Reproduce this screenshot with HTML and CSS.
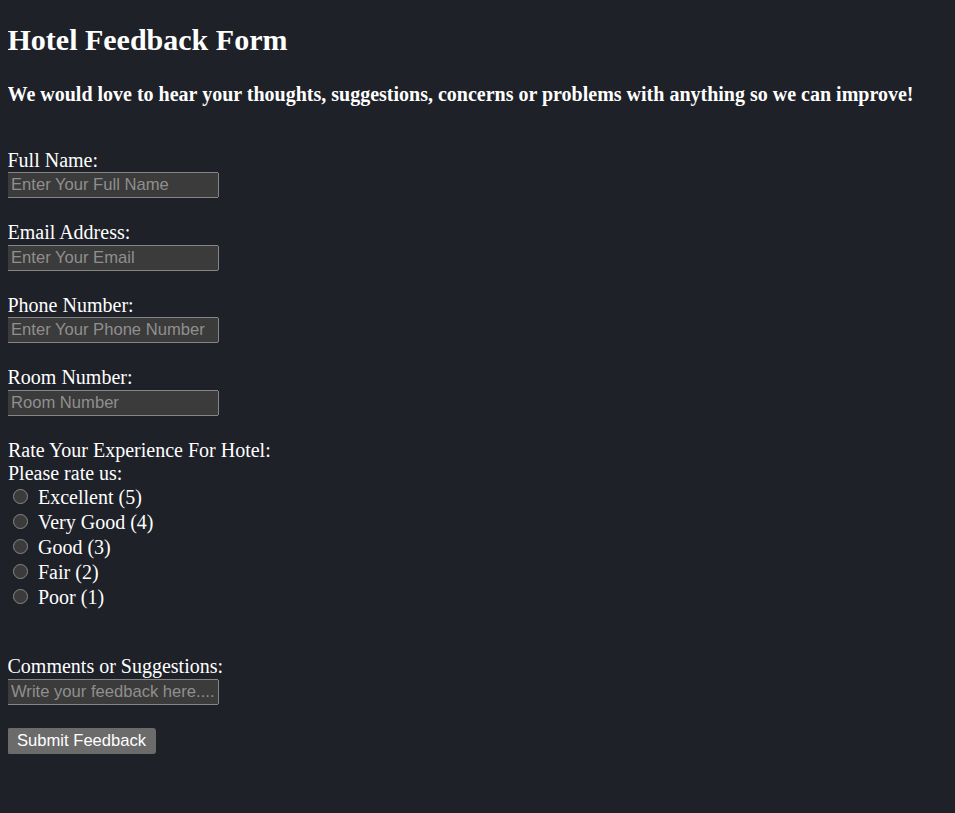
FILE: index.html
```html
<!DOCTYPE html>
<html lang="en">
<head>
<meta charset="utf-8">
<title>Hotel Feedback Form</title>
<link rel="stylesheet" href="styles.css">
</head>
<body>
<h1 class="title">Hotel Feedback Form</h1>
<h3 class="subtitle">We would love to hear your thoughts, suggestions, concerns or problems with anything so we can improve!</h3>
<form class="form">
  <div class="field">
    <label class="label" for="name">Full Name:</label>
    <input class="input" id="name" type="text" placeholder="Enter Your Full Name">
  </div>
  <div class="field">
    <label class="label" for="email">Email Address:</label>
    <input class="input" id="email" type="email" placeholder="Enter Your Email">
  </div>
  <div class="field">
    <label class="label" for="phone">Phone Number:</label>
    <input class="input" id="phone" type="tel" placeholder="Enter Your Phone Number">
  </div>
  <div class="field">
    <label class="label" for="room">Room Number:</label>
    <input class="input" id="room" type="text" placeholder="Room Number">
  </div>
  <div class="rating">
    <div class="rate-title">Rate Your Experience For Hotel:</div>
    <div class="rate-sub">Please rate us:</div>
    <div class="opt"><input class="radio" type="radio" name="rate" id="r5"><label for="r5">Excellent (5)</label></div>
    <div class="opt"><input class="radio" type="radio" name="rate" id="r4"><label for="r4">Very Good (4)</label></div>
    <div class="opt"><input class="radio" type="radio" name="rate" id="r3"><label for="r3">Good (3)</label></div>
    <div class="opt"><input class="radio" type="radio" name="rate" id="r2"><label for="r2">Fair (2)</label></div>
    <div class="opt"><input class="radio" type="radio" name="rate" id="r1"><label for="r1">Poor (1)</label></div>
  </div>
  <div class="field comments">
    <label class="label" for="comments">Comments or Suggestions:</label>
    <input class="input" id="comments" type="text" placeholder="Write your feedback here....">
  </div>
  <button class="submit" type="submit">Submit Feedback</button>
</form>
</body>
</html>
```
FILE: styles.css
```css
:root {
  color-scheme: dark;
}
body {
  margin: 8px;
  background: #1e2128;
  color: #ffffff;
  font-family: "Liberation Serif", "Times New Roman", serif;
  font-size: 20px;
}
.title {
  font-size: 30px;
  margin: 14.6px 0 0 -0.5px;
  line-height: normal;
}
.subtitle {
  font-size: 20px;
  margin: 26.7px 0 0 -0.5px;
  line-height: normal;
}
.form {
  margin-top: 42.7px;
}
.field {
  margin-bottom: 23px;
}
.label {
  display: block;
  margin-left: -0.5px;
}
.input {
  display: block;
  box-sizing: border-box;
  width: 212px;
  height: 26px;
  margin: 0.5px 0 0 -1px;
  font-family: "Liberation Sans", Arial, sans-serif;
  font-size: 16.6px;
}
.input::placeholder {
  color: #8f8f8f;
}
.rate-title,
.rate-sub {
  line-height: normal;
}
.opt {
  line-height: 25px;
}
.radio {
  width: 15px;
  height: 15px;
  margin: 3px 10px 0 5px;
}
.rating {
  margin-bottom: 45px;
}
.comments {
  margin-bottom: 23px;
}
.comments .input {
  margin-top: 1.5px;
}
.submit {
  display: block;
  box-sizing: border-box;
  height: 26px;
  margin-left: -1px;
  padding: 1px 8px;
  font-family: "Liberation Sans", Arial, sans-serif;
  font-size: 16.6px;
}
```
